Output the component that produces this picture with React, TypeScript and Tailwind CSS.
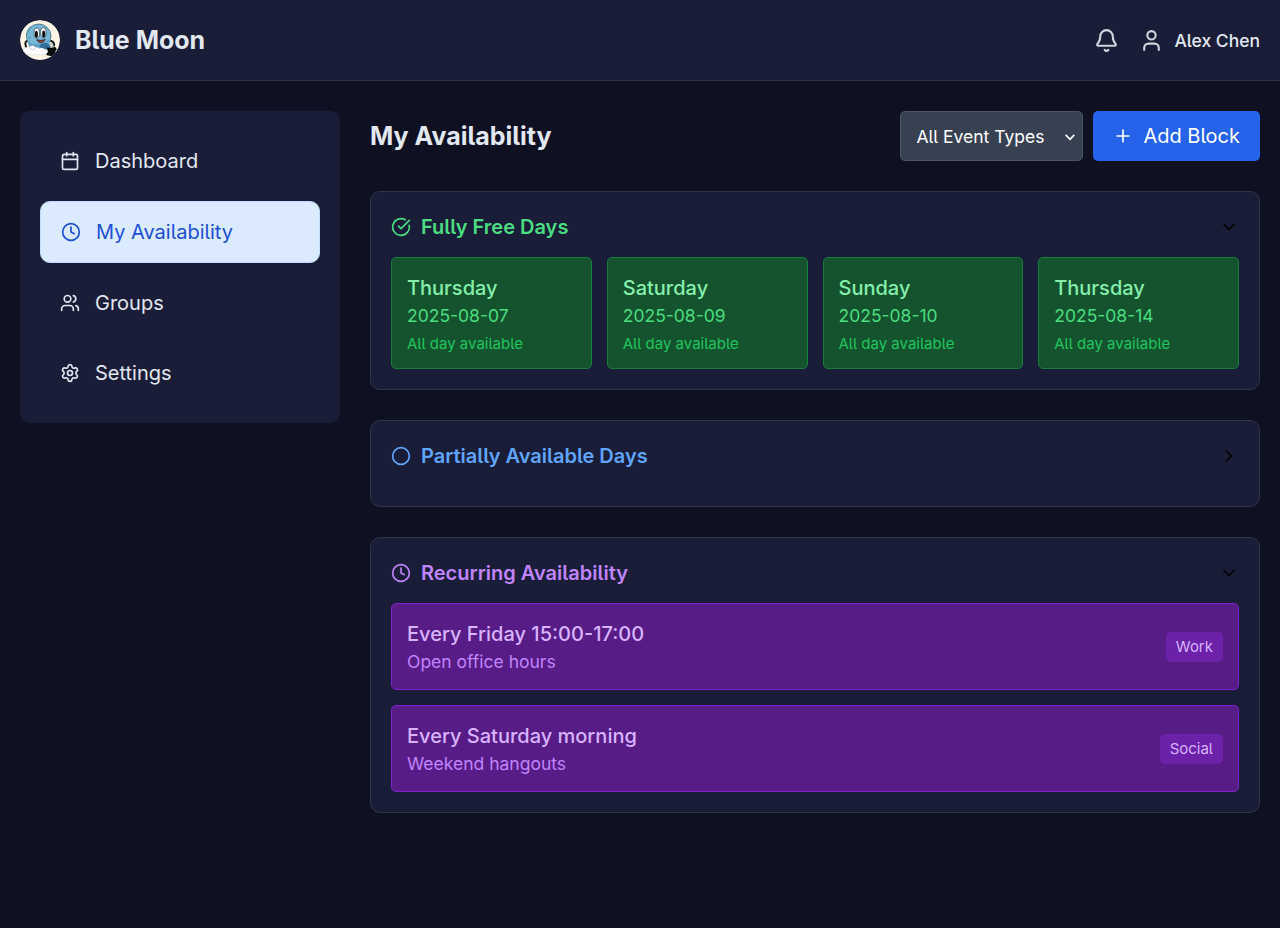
import {
  Bell,
  Calendar,
  ChevronDown,
  ChevronRight,
  Circle,
  CircleCheckBig,
  Clock,
  Plus,
  Settings,
  User,
  Users,
} from 'lucide-react';
import type { LucideIcon } from 'lucide-react';
import type { ReactNode } from 'react';

const navItems: { label: string; icon: LucideIcon; active?: boolean }[] = [
  { label: 'Dashboard', icon: Calendar },
  { label: 'My Availability', icon: Clock, active: true },
  { label: 'Groups', icon: Users },
  { label: 'Settings', icon: Settings },
];

const freeDays = [
  { day: 'Thursday', date: '2025-08-07' },
  { day: 'Saturday', date: '2025-08-09' },
  { day: 'Sunday', date: '2025-08-10' },
  { day: 'Thursday', date: '2025-08-14' },
];

const recurring = [
  { title: 'Every Friday 15:00-17:00', note: 'Open office hours', tag: 'Work' },
  { title: 'Every Saturday morning', note: 'Weekend hangouts', tag: 'Social' },
];

function Logo() {
  return (
    <svg viewBox="0 0 40 40" className="size-10 rounded-full">
      <circle cx="20" cy="20" r="20" fill="#fdf6e7" />
      <path d="M8.500 20.500c-3 .3-4 3-2.500 6" fill="none" stroke="#111518" strokeWidth="2" strokeLinecap="round" />
      <path d="M31 21c2.500.5 3.600 2.500 3 4.500" fill="none" stroke="#111518" strokeWidth="2" strokeLinecap="round" />
      <ellipse cx="18.700" cy="16.200" rx="12.300" ry="12.200" fill="#78b7d5" stroke="#2f5d73" strokeWidth="0.700" />
      <path d="M6.700 19c2 5 9 6.500 16 4.500l7.500-4-1 6-8 4H10z" fill="#5b9fc4" />
      <path d="M7 14c.5-3 2-5.500 4-7" fill="none" stroke="#5a9aba" strokeWidth="1.600" />
      <circle cx="25" cy="7.300" r="0.900" fill="#5596b6" />
      <circle cx="9.800" cy="17.500" r="1.100" fill="#5596b6" />
      <ellipse cx="16.800" cy="13" rx="2.700" ry="5" fill="#fff" stroke="#142028" strokeWidth="0.600" />
      <ellipse cx="23.400" cy="12.600" rx="2.700" ry="5" fill="#fff" stroke="#142028" strokeWidth="0.600" />
      <ellipse cx="16.400" cy="14.300" rx="1.500" ry="3.500" fill="#080a0c" />
      <ellipse cx="23.700" cy="14" rx="1.500" ry="3.500" fill="#080a0c" />
      <path d="M16.800 19.700c2.700 1 6 .9 8.300-.4-.8 4.200-6.700 4.600-8.300.4z" fill="#b5483d" stroke="#142028" strokeWidth="0.800" />
      <path d="M19.500 26c1.500-3.500 7-4 9.500-1.500l2 3-4 2-6-1z" fill="#2f6d96" />
      <path d="M3 32.500c-1-3 1-5 3.500-4.500 2-2 4.500-1.500 6 0 2-1 5-1 6.500 .5 3-1 5 0 6 1.500 2.500-.5 4 1 3 3-4 2.500-22 2.700-25-.5z" fill="#fff" stroke="#c5d3db" strokeWidth="0.500" />
      <path d="M26.500 27.500l4.500.5 4-1.200 1.800 2.200-1.300 2.200-.8 3.300-3.200 1.800-5.500-1.300 2-3.500z" fill="#080a0c" />
      <ellipse cx="12.500" cy="27.500" rx="2.800" ry="1.900" fill="#fff" stroke="#7d929e" strokeWidth="0.400" />
      <circle cx="31.500" cy="25.300" r="1.800" fill="#eef0ea" stroke="#34434b" strokeWidth="0.400" />
    </svg>
  );
}

function Section({
  title,
  icon: Icon,
  tone,
  open,
  children,
}: {
  title: string;
  icon: LucideIcon;
  tone: string;
  open: boolean;
  children?: ReactNode;
}) {
  const Chevron = open ? ChevronDown : ChevronRight;
  return (
    <section className="rounded-[10px] border border-[#2d3748] bg-[#1a1d37] p-5">
      <div className="mb-[15px] flex items-center justify-between">
        <h3 className={`flex items-center gap-2.5 text-[20px] leading-[30px] font-semibold ${tone}`}>
          <Icon size={20} />
          {title}
        </h3>
        <Chevron size={20} className="text-black" />
      </div>
      {children}
    </section>
  );
}

export default function App() {
  return (
    <div className="min-h-screen bg-[#0f1021] font-['Inter',sans-serif] text-[20px] leading-[30px] text-[#e2e8f0] [font-feature-settings:'cv05']">
      <header className="flex h-[81px] items-center justify-between border-b border-[#2d3748] bg-[#1a1d37] px-5">
        <div className="flex items-center gap-[15px]">
          <Logo />
          <h1 className="text-[25px] leading-[35px] font-bold">Blue Moon</h1>
        </div>
        <div className="flex items-center gap-5">
          <Bell size={25} className="text-[#d1d5db]" />
          <div className="flex items-center gap-2.5">
            <User size={25} className="text-[#d1d5db]" />
            <span className="text-[17.5px] leading-[25px] font-medium">Alex Chen</span>
          </div>
        </div>
      </header>

      <div className="flex items-start gap-[30px] px-5 py-[30px]">
        <nav className="flex w-80 shrink-0 flex-col gap-2.5 rounded-[10px] bg-[#1a1d37] p-5">
          {navItems.map(({ label, icon: Icon, active }) => (
            <a
              key={label}
              className={`flex items-center gap-[15px] rounded-[10px] px-5 py-[15px] ${
                active ? 'border border-[#bfdbfe] bg-[#dbeafe] text-[#1d4ed8]' : ''
              }`}
            >
              <Icon size={20} />
              {label}
            </a>
          ))}
        </nav>

        <main className="flex min-w-0 flex-1 flex-col gap-[30px]">
          <div className="flex items-center justify-between">
            <h2 className="text-[25px] leading-[35px] font-bold">My Availability</h2>
            <div className="flex gap-2.5">
              <div className="relative">
                <select className="block h-[50px] w-[183px] appearance-none rounded-[5px] border border-[#4b5563] bg-[#374151] px-[15px] text-[17.5px] leading-[25px] text-white [font-feature-settings:'cv05']">
                  <option>All Event Types</option>
                </select>
                <svg
                  viewBox="0 0 10 7"
                  className="pointer-events-none absolute top-[23px] right-[8px] h-[7px] w-[10px]"
                  fill="none"
                  stroke="#fff"
                  strokeWidth="1.7"
                >
                  <path d="M0.700 0.900 5 5.300 9.300 0.900" />
                </svg>
              </div>
              <button className="flex h-[50px] items-center gap-2.5 rounded-[5px] bg-[#2563eb] px-5 text-white [font-feature-settings:'cv05']">
                <Plus size={20} />
                Add Block
              </button>
            </div>
          </div>

          <Section title="Fully Free Days" icon={CircleCheckBig} tone="text-[#4ade80]" open>
            <div className="grid grid-cols-4 gap-[15px]">
              {freeDays.map(({ day, date }) => (
                <div key={date} className="rounded-[5px] border border-[#15803d] bg-[#14532d] p-[15px]">
                  <div className="font-medium text-[#86efac]">{day}</div>
                  <div className="text-[17.5px] leading-[25px] text-[#4ade80]">{date}</div>
                  <div className="mt-[5px] pt-px text-[15px] leading-[19px] text-[#22c55e]">All day available</div>
                </div>
              ))}
            </div>
          </Section>

          <Section title="Partially Available Days" icon={Circle} tone="text-[#60a5fa]" open={false} />

          <Section title="Recurring Availability" icon={Clock} tone="text-[#c084fc]" open>
            <div className="flex flex-col gap-[15px]">
              {recurring.map(({ title, note, tag }) => (
                <div
                  key={title}
                  className="flex items-center justify-between rounded-[5px] border border-[#7e22ce] bg-[#581c87] p-[15px]"
                >
                  <div>
                    <div className="font-medium text-[#d8b4fe]">{title}</div>
                    <div className="text-[17.5px] leading-[25px] text-[#c084fc]">{note}</div>
                  </div>
                  <span className="rounded-[5px] bg-[#6b21a8] px-2.5 py-[5px] text-[15px] leading-5 text-[#d8b4fe]">
                    {tag}
                  </span>
                </div>
              ))}
            </div>
          </Section>
        </main>
      </div>
    </div>
  );
}
